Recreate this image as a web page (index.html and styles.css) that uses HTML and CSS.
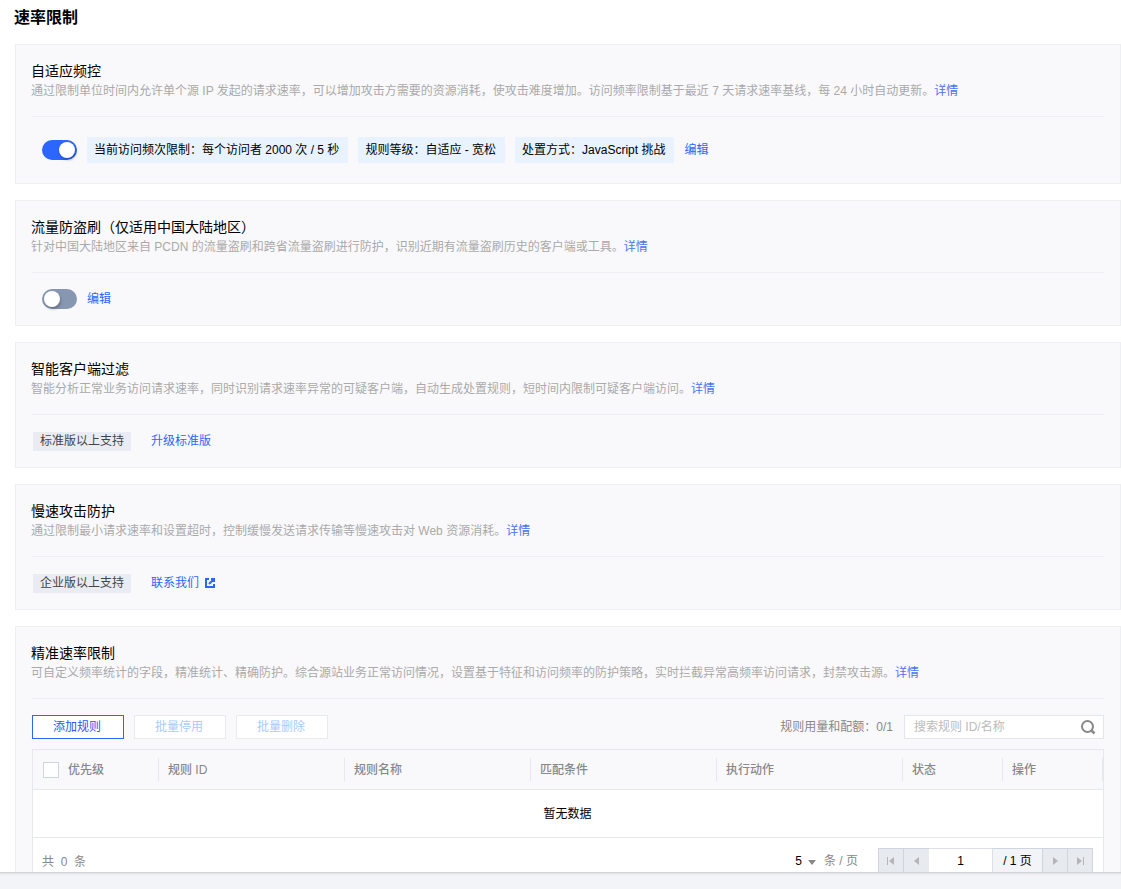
FILE: index.html
```html
<!DOCTYPE html>
<html lang="zh-CN">
<head>
    <meta charset="UTF-8">
    <meta name="viewport" content="width=device-width, initial-scale=1.0">
    <title>速率限制</title>
    <link rel="stylesheet" href="styles.css">
</head>
<body>
    <main class="content">
        <h1 class="page-title">速率限制</h1>

        <section class="card card-adaptive">
            <h2>自适应频控</h2>
            <p class="desc">通过限制单位时间内允许单个源 IP 发起的请求速率，可以增加攻击方需要的资源消耗，使攻击难度增加。访问频率限制基于最近 7 天请求速率基线，每 24 小时自动更新。<a href="#">详情</a></p>
            <div class="row">
                <span class="switch on"></span>
                <span class="tag">当前访问频次限制：每个访问者 2000 次 / 5 秒</span>
                <span class="tag">规则等级：自适应 - 宽松</span>
                <span class="tag">处置方式：JavaScript 挑战</span>
                <a href="#">编辑</a>
            </div>
        </section>

        <section class="card">
            <h2>流量防盗刷（仅适用中国大陆地区）</h2>
            <p class="desc">针对中国大陆地区来自 PCDN 的流量盗刷和跨省流量盗刷进行防护，识别近期有流量盗刷历史的客户端或工具。<a href="#">详情</a></p>
            <div class="row">
                <span class="switch"></span>
                <a href="#">编辑</a>
            </div>
        </section>

        <section class="card">
            <h2>智能客户端过滤</h2>
            <p class="desc">智能分析正常业务访问请求速率，同时识别请求速率异常的可疑客户端，自动生成处置规则，短时间内限制可疑客户端访问。<a href="#">详情</a></p>
            <div class="row plan">
                <span class="badge">标准版以上支持</span>
                <a href="#">升级标准版</a>
            </div>
        </section>

        <section class="card">
            <h2>慢速攻击防护</h2>
            <p class="desc">通过限制最小请求速率和设置超时，控制缓慢发送请求传输等慢速攻击对 Web 资源消耗。<a href="#">详情</a></p>
            <div class="row plan">
                <span class="badge">企业版以上支持</span>
                <a href="#" class="external">联系我们
                    <svg width="10" height="10" viewBox="0 0 10 10" fill="none" stroke="currentColor" stroke-width="2">
                        <path d="M4 1H1v8h8V6M6 1h3v3M9 1L4 6"/>
                    </svg>
                </a>
            </div>
        </section>

        <section class="card card-rules">
            <h2>精准速率限制</h2>
            <p class="desc">可自定义频率统计的字段，精准统计、精确防护。综合源站业务正常访问情况，设置基于特征和访问频率的防护策略，实时拦截异常高频率访问请求，封禁攻击源。<a href="#">详情</a></p>
            <div class="toolbar">
                <button class="btn primary">添加规则</button>
                <button class="btn" disabled>批量停用</button>
                <button class="btn" disabled>批量删除</button>
                <span class="quota">规则用量和配额：0/1</span>
                <div class="search">
                    <input type="text" placeholder="搜索规则 ID/名称">
                    <svg width="16" height="16" viewBox="0 0 16 16" fill="none" stroke="#888" stroke-width="2">
                        <circle cx="7.5" cy="7.5" r="5.5"/>
                        <path d="M11 11l3.5 3.5" stroke-width="2.5"/>
                    </svg>
                </div>
            </div>

            <div class="table">
                <div class="thead">
                    <div class="th check"><span class="checkbox"></span>优先级</div>
                    <div class="th">规则 ID</div>
                    <div class="th">规则名称</div>
                    <div class="th">匹配条件</div>
                    <div class="th">执行动作</div>
                    <div class="th">状态</div>
                    <div class="th">操作</div>
                </div>
                <div class="empty">暂无数据</div>
                <div class="tfoot">
                    <span class="total">共&nbsp; 0 &nbsp;条</span>
                    <span class="size">5</span>
                    <span class="caret"></span>
                    <span class="unit">条 / 页</span>
                    <div class="pager">
                        <span class="page-btn"><svg width="8" height="8" viewBox="0 0 8 8"><path d="M0 0h1v8H0zM7 0v8L2 4z"/></svg></span>
                        <span class="page-btn"><svg width="8" height="8" viewBox="0 0 8 8"><path d="M6 0v8L1 4z"/></svg></span>
                        <span class="page-now">1</span>
                        <span class="page-all">/ 1 页</span>
                        <span class="page-btn"><svg width="8" height="8" viewBox="0 0 8 8"><path d="M2 0v8l5-4z"/></svg></span>
                        <span class="page-btn"><svg width="8" height="8" viewBox="0 0 8 8"><path d="M7 0h1v8H7zM1 0v8l5-4z"/></svg></span>
                    </div>
                </div>
            </div>
        </section>
    </main>
    <footer class="bottom"></footer>
</body>
</html>
```
FILE: styles.css
```css
* {box-sizing: border-box;}
body {
    margin: 0;
    height: 889px;
    overflow: hidden;
    display: flex;
    flex-direction: column;
    font-family: "Liberation Sans", "Noto Sans CJK SC", sans-serif;
    font-size: 12px;
    line-height: 18px;
    color: #000;
    background-color: #f3f4f8;
}
a {color: #2a66ff; text-decoration: none;}
.content {
    height: 872px;
    overflow: hidden;
    padding-left: 15px;
    background-color: #fff;
}
.bottom {
    flex: 1;
    border-top: 1px solid #d2d3d8;
    box-shadow: inset 0 2px 2px -1px #dfe0e4;
}
.page-title {
    margin: 0 0 8px -1px;
    font-size: 16px;
    line-height: 36px;
    font-weight: bold;
}
.card {
    height: 126px;
    margin-bottom: 16px;
    padding: 16px 16px 0;
    border: 1px solid #eeeff3;
    background-color: #f9f9fc;
}
.card-adaptive {height: 140px;}
.card-rules {height: 300px;}
.card h2 {
    margin: 0 0 0 -1px;
    font-size: 14px;
    line-height: 20px;
    font-weight: normal;
}
.desc {
    height: 36px;
    margin: 0;
    border-bottom: 1px solid #eeeff2;
    color: #aaa;
    line-height: 20px;
    text-indent: -1px;
    white-space: nowrap;
}
.desc a {color: #4a72ee;}
.row {
    display: flex;
    align-items: center;
    gap: 10px;
    height: 52px;
    padding-left: 10px;
}
.card-adaptive .row {height: 66px;}
.row.plan {gap: 20px; padding-left: 1px;}
.switch {
    width: 35px;
    height: 20px;
    padding: 2px;
    border-radius: 10px;
    background-color: #8897b1;
}
.switch::before {
    content: "";
    display: block;
    width: 16px;
    height: 16px;
    border-radius: 50%;
    background-color: #fff;
    box-shadow: 1px 2px 3px rgba(0, 0, 0, .25);
}
.switch.on {background-color: #2a66ff; padding-left: 17px;}
.tag {
    padding: 4px 9px 4px 7px;
    background-color: #e8f3ff;
}
.badge {
    height: 19px;
    padding: 0 7px;
    background-color: #e9ecf3;
    color: #444;
}
.external {display: flex; align-items: center; gap: 6px;}
.toolbar {
    display: flex;
    gap: 10px;
    padding: 16px 0 10px;
}
.btn {
    width: 92px;
    height: 24px;
    padding: 0 2px 0 0;
    border: 1px solid #e7eaef;
    background-color: #fff;
    color: #a8ccff;
    font: inherit;
    line-height: 20px;
}
.btn.primary {border-color: #2a66ff; color: #2a56ff;}
.quota {
    margin-left: auto;
    padding-right: 1px;
    line-height: 24px;
    color: #888;
}
.search {
    display: flex;
    align-items: center;
    width: 200px;
    height: 24px;
    padding: 0 7px 0 9px;
    border: 1px solid #e4e6ee;
    background-color: #fff;
}
.search input {
    flex: 1;
    min-width: 0;
    padding: 0;
    border: none;
    outline: none;
    font: inherit;
}
.search input::placeholder {color: #bbb;}
.table {
    border: 1px solid #e5e8ed;
    background-color: #fff;
}
.thead {
    display: grid;
    grid-template-columns: 126px 186px 186px 186px 186px 100px 100px;
    align-items: center;
    height: 40px;
    border-bottom: 1px solid #e5e8ed;
    background-color: #f9f9fc;
}
.th {
    height: 23px;
    padding-left: 9px;
    border-right: 1px solid #e5e8ed;
    line-height: 25px;
    font-weight: 500;
    color: #888;
}
.check {display: flex; gap: 9px; padding-left: 10px;}
.checkbox {
    width: 16px;
    height: 16px;
    margin-top: 4px;
    border: 1px solid #cfd5de;
    background-color: #fff;
}
.empty {
    height: 48px;
    padding-right: 1px;
    border-bottom: 1px solid #e5e8ed;
    line-height: 49px;
    text-align: center;
}
.tfoot {
    display: flex;
    height: 46px;
    padding: 10px 10px 0 9px;
    line-height: 26px;
}
.total {flex: 1; color: #888; line-height: 28px;}
.caret {
    margin: 12px 8px 0 6px;
    border: 4px solid transparent;
    border-top: 5px solid #888;
    border-bottom: 0;
    height: 0;
}
.unit {width: 54px; color: #888;}
.pager {display: flex; height: 26px; line-height: 25px;}
.page-btn {
    display: flex;
    align-items: center;
    justify-content: center;
    width: 25px;
    border: 1px solid #cfd5de;
    border-right: 0;
    background-color: #e7eaef;
    fill: #b4b5b8;
}
.page-btn:nth-child(2) {width: 26px;}
.page-btn:last-child {width: 26px; border-right: 1px solid #cfd5de;}
.page-now {
    width: 63px;
    border-top: 1px solid #dcdfe7;
    text-align: center;
}
.page-all {
    width: 50px;
    border-top: 1px solid #cfd5de;
    border-left: 1px solid #dcdfe7;
    text-align: center;
    background-color: #f3f4f8;
}
```
